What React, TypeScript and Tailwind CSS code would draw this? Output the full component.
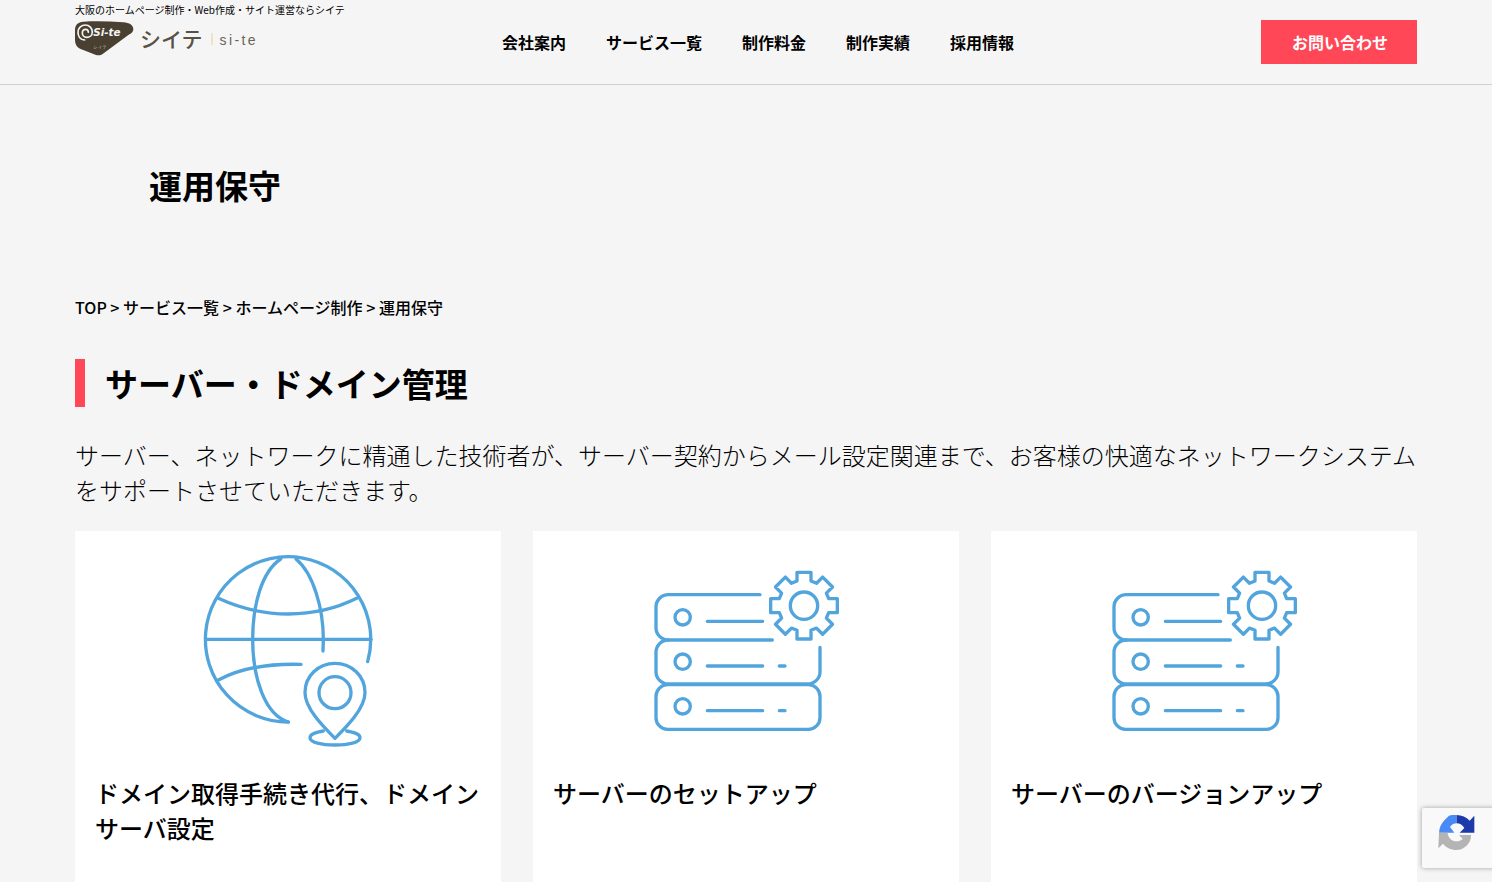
import React from 'react';

const navItems = ['会社案内', 'サービス一覧', '制作料金', '制作実績', '採用情報'];

// gear outline with 8 teeth, one of them pointing straight up
const gearPath = (cx: number, cy: number) => {
  const pts: string[] = [];
  for (let i = 0; i < 8; i++) {
    const a = (i * Math.PI) / 4;
    const local: [number, number][] = [
      [-21, -74],
      [-21, -100],
      [21, -100],
      [21, -74],
    ];
    local.forEach(([x, y]) => {
      const px = cx + x * Math.cos(a) - y * Math.sin(a);
      const py = cy + x * Math.sin(a) + y * Math.cos(a);
      pts.push(`${px.toFixed(1)} ${py.toFixed(1)}`);
    });
  }
  return 'M' + pts.join('L') + 'Z';
};

const GlobeIcon = () => (
  <svg viewBox="0 0 600 630" className="w-[200px] h-[210px]" fill="none" stroke="#52a5dc" strokeWidth="10" strokeLinecap="round" strokeLinejoin="round">
    <path d="M533 350A248 248 0 1 0 295 531" />
    <path d="M272 42C215 80 188 180 188 283C188 400 225 510 295 531" />
    <path d="M318 42C370 85 400 190 400 283L399 318" />
    <path d="M85 160C150 190 220 207 295 207C370 207 440 190 500 160" />
    <path d="M50 283H543" />
    <path d="M85 405C150 370 230 355 333 358" />
    <path d="M435 580C400 545 345 490 345 443C345 393 385 355 435 355C485 355 525 393 525 443C525 490 470 545 435 580Z" />
    <circle cx="435" cy="443" r="48" />
    <path d="M400 558C375 562 360 568 360 578C360 592 395 600 435 600C475 600 510 592 510 578C510 568 495 562 470 558" />
  </svg>
);

const ServerIcon = () => (
  <svg viewBox="0 0 630 540" className="w-[210px] h-[180px]" fill="none" stroke="#52a5dc" strokeWidth="10" strokeLinecap="round" strokeLinejoin="round">
    <path d="M360 104H85A37 37 0 0 0 48 141V203A37 37 0 0 0 85 240H397" />
    <path d="M85 240A37 37 0 0 0 48 277V335A37 37 0 0 0 85 372H503A37 37 0 0 0 540 335V262" />
    <rect x="48" y="374" width="492" height="134" rx="35" />
    <circle cx="128" cy="172" r="23" />
    <circle cx="128" cy="305" r="23" />
    <circle cx="128" cy="439" r="23" />
    <path d="M202 184H368M202 318H368M202 452H368M418 318H435M418 452H435" />
    <path d={gearPath(492, 137)} />
    <circle cx="492" cy="137" r="41" />
  </svg>
);

const Logo = () => (
  <div className="flex items-center h-10 -ml-[5px]">
    <svg viewBox="0 0 210 120" className="w-[70px] h-10 shrink-0">
      <path d="M40 11C80 9 120 10 160 13C178 14 190 22 190 34C190 42 184 47 176 50L98 108C92 113 84 113 76 110L30 92C20 87 15 78 15 66V36C15 20 24 12 40 11Z" fill="#4a4031" />
      <path d="M44 66C30 66 24 54 24 43C24 29 35 21 46 21C58 21 67 31 67 42C67 52 59 58 50 58C42 58 37 52 37 45C37 39 41 34 47 34C52 34 55 38 55 43" fill="none" stroke="#f5f5f5" strokeWidth="5" strokeLinecap="round" />
      <text x="70" y="54" fontSize="31" fontWeight="700" fontStyle="italic" fill="#f5f5f5" fontFamily="'DejaVu Sans', sans-serif">Si-te</text>
      <text x="70" y="92" fontSize="12" fill="#d8d2c4" letterSpacing="2">シイテ</text>
    </svg>
    <span className="text-[21px] leading-none font-medium text-[#5a5145]">シイテ</span>
    <span className="ml-[8px] mt-[1px] w-[2px] h-[12px] bg-[#efe3c6]" />
    <span className="ml-[7px] mt-[3px] text-[14px] leading-none text-[#6b6458] tracking-[0.17em] font-['Liberation_Sans',sans-serif]">si-te</span>
  </div>
);

const RecaptchaMark = () => (
  <svg viewBox="0 0 135 135" className="w-[45px] h-[45px]">
    <path d="M65 15V40C56 40 49 45 45 51L58 68H12C13 52 19 40 29 30L42 17C48 15 56 15 65 15Z" fill="#4a8af4" />
    <path d="M65 15C80 15 94 22 104 32L118 17V68H74L88 54C83 46 75 40 65 40Z" fill="#1c3aa9" />
    <path d="M12 68H38C38 82 50 94 65 94C72 94 78 92 83 87L72 75H108C108 82 107 90 103 96C95 110 81 120 65 120C47 120 32 112 24 101L10 115Z" fill="#b4b4b4" />
  </svg>
);

const cards = [
  { icon: <GlobeIcon />, title: 'ドメイン取得手続き代行、ドメインサーバ設定', top: 'pt-[14px] pl-[4px]' },
  { icon: <ServerIcon />, title: 'サーバーのセットアップ', top: 'pt-[29px] pr-[3px]' },
  { icon: <ServerIcon />, title: 'サーバーのバージョンアップ', top: 'pt-[29px] pr-[3px]' },
];

export default function App() {
  return (
    <div className="relative h-[882px] overflow-hidden bg-[#f5f5f5] text-black font-['Noto_Sans_CJK_JP','Noto_Sans',sans-serif]">
      <header className="h-[85px] border-b border-[#d0d0d0] px-[75px] flex">
        <div className="w-[270px] pt-[3px]">
          <p className="text-[10px] leading-[14px] whitespace-nowrap">大阪のホームページ制作・Web作成・サイト運営ならシイテ</p>
          <div className="mt-[1px]">
            <Logo />
          </div>
        </div>
        <nav className="ml-[157px] flex gap-10 items-center text-base font-bold">
          {navItems.map(item => (
            <a key={item}>{item}</a>
          ))}
        </nav>
        <a className="ml-auto mt-5 w-[156px] h-11 pl-[2px] bg-[#ff4757] text-white font-bold text-base flex items-center justify-center">お問い合わせ</a>
      </header>

      <main className="px-[75px]">
        <h1 className="pl-[74px] pt-[75px] text-[33px] leading-[50px] font-bold">運用保守</h1>
        <p className="mt-[85px] text-base leading-6 font-medium">TOP &gt; サービス一覧 &gt; ホームページ制作 &gt; 運用保守</p>

        <h2 className="mt-[40px] h-12 border-l-[10px] border-[#ff4757] pl-5 text-[33px] leading-[48px] font-bold">サーバー・ドメイン管理</h2>
        <p className="mt-[30px] text-2xl leading-[35px] font-light">
          サーバー、ネットワークに精通した技術者が、サーバー契約からメール設定関連まで、お客様の快適なネットワークシステムをサポートさせていただきます。
        </p>

        <div className="mt-[24px] grid grid-cols-3 gap-8">
          {cards.map(card => (
            <div key={card.title} className="bg-white h-[400px]">
              <div className={`h-[244px] flex justify-center ${card.top}`}>{card.icon}</div>
              <p className="px-5 text-2xl leading-[35px] font-medium">{card.title}</p>
            </div>
          ))}
        </div>
      </main>

      <div className="absolute left-[1422px] top-[808px] w-[256px] h-[60px] bg-[#f9f9f9] rounded-[2px] shadow-[0_0_5px_rgba(0,0,0,0.35)] pl-[13px] pt-[2px] flex items-start">
        <RecaptchaMark />
      </div>
    </div>
  );
}
